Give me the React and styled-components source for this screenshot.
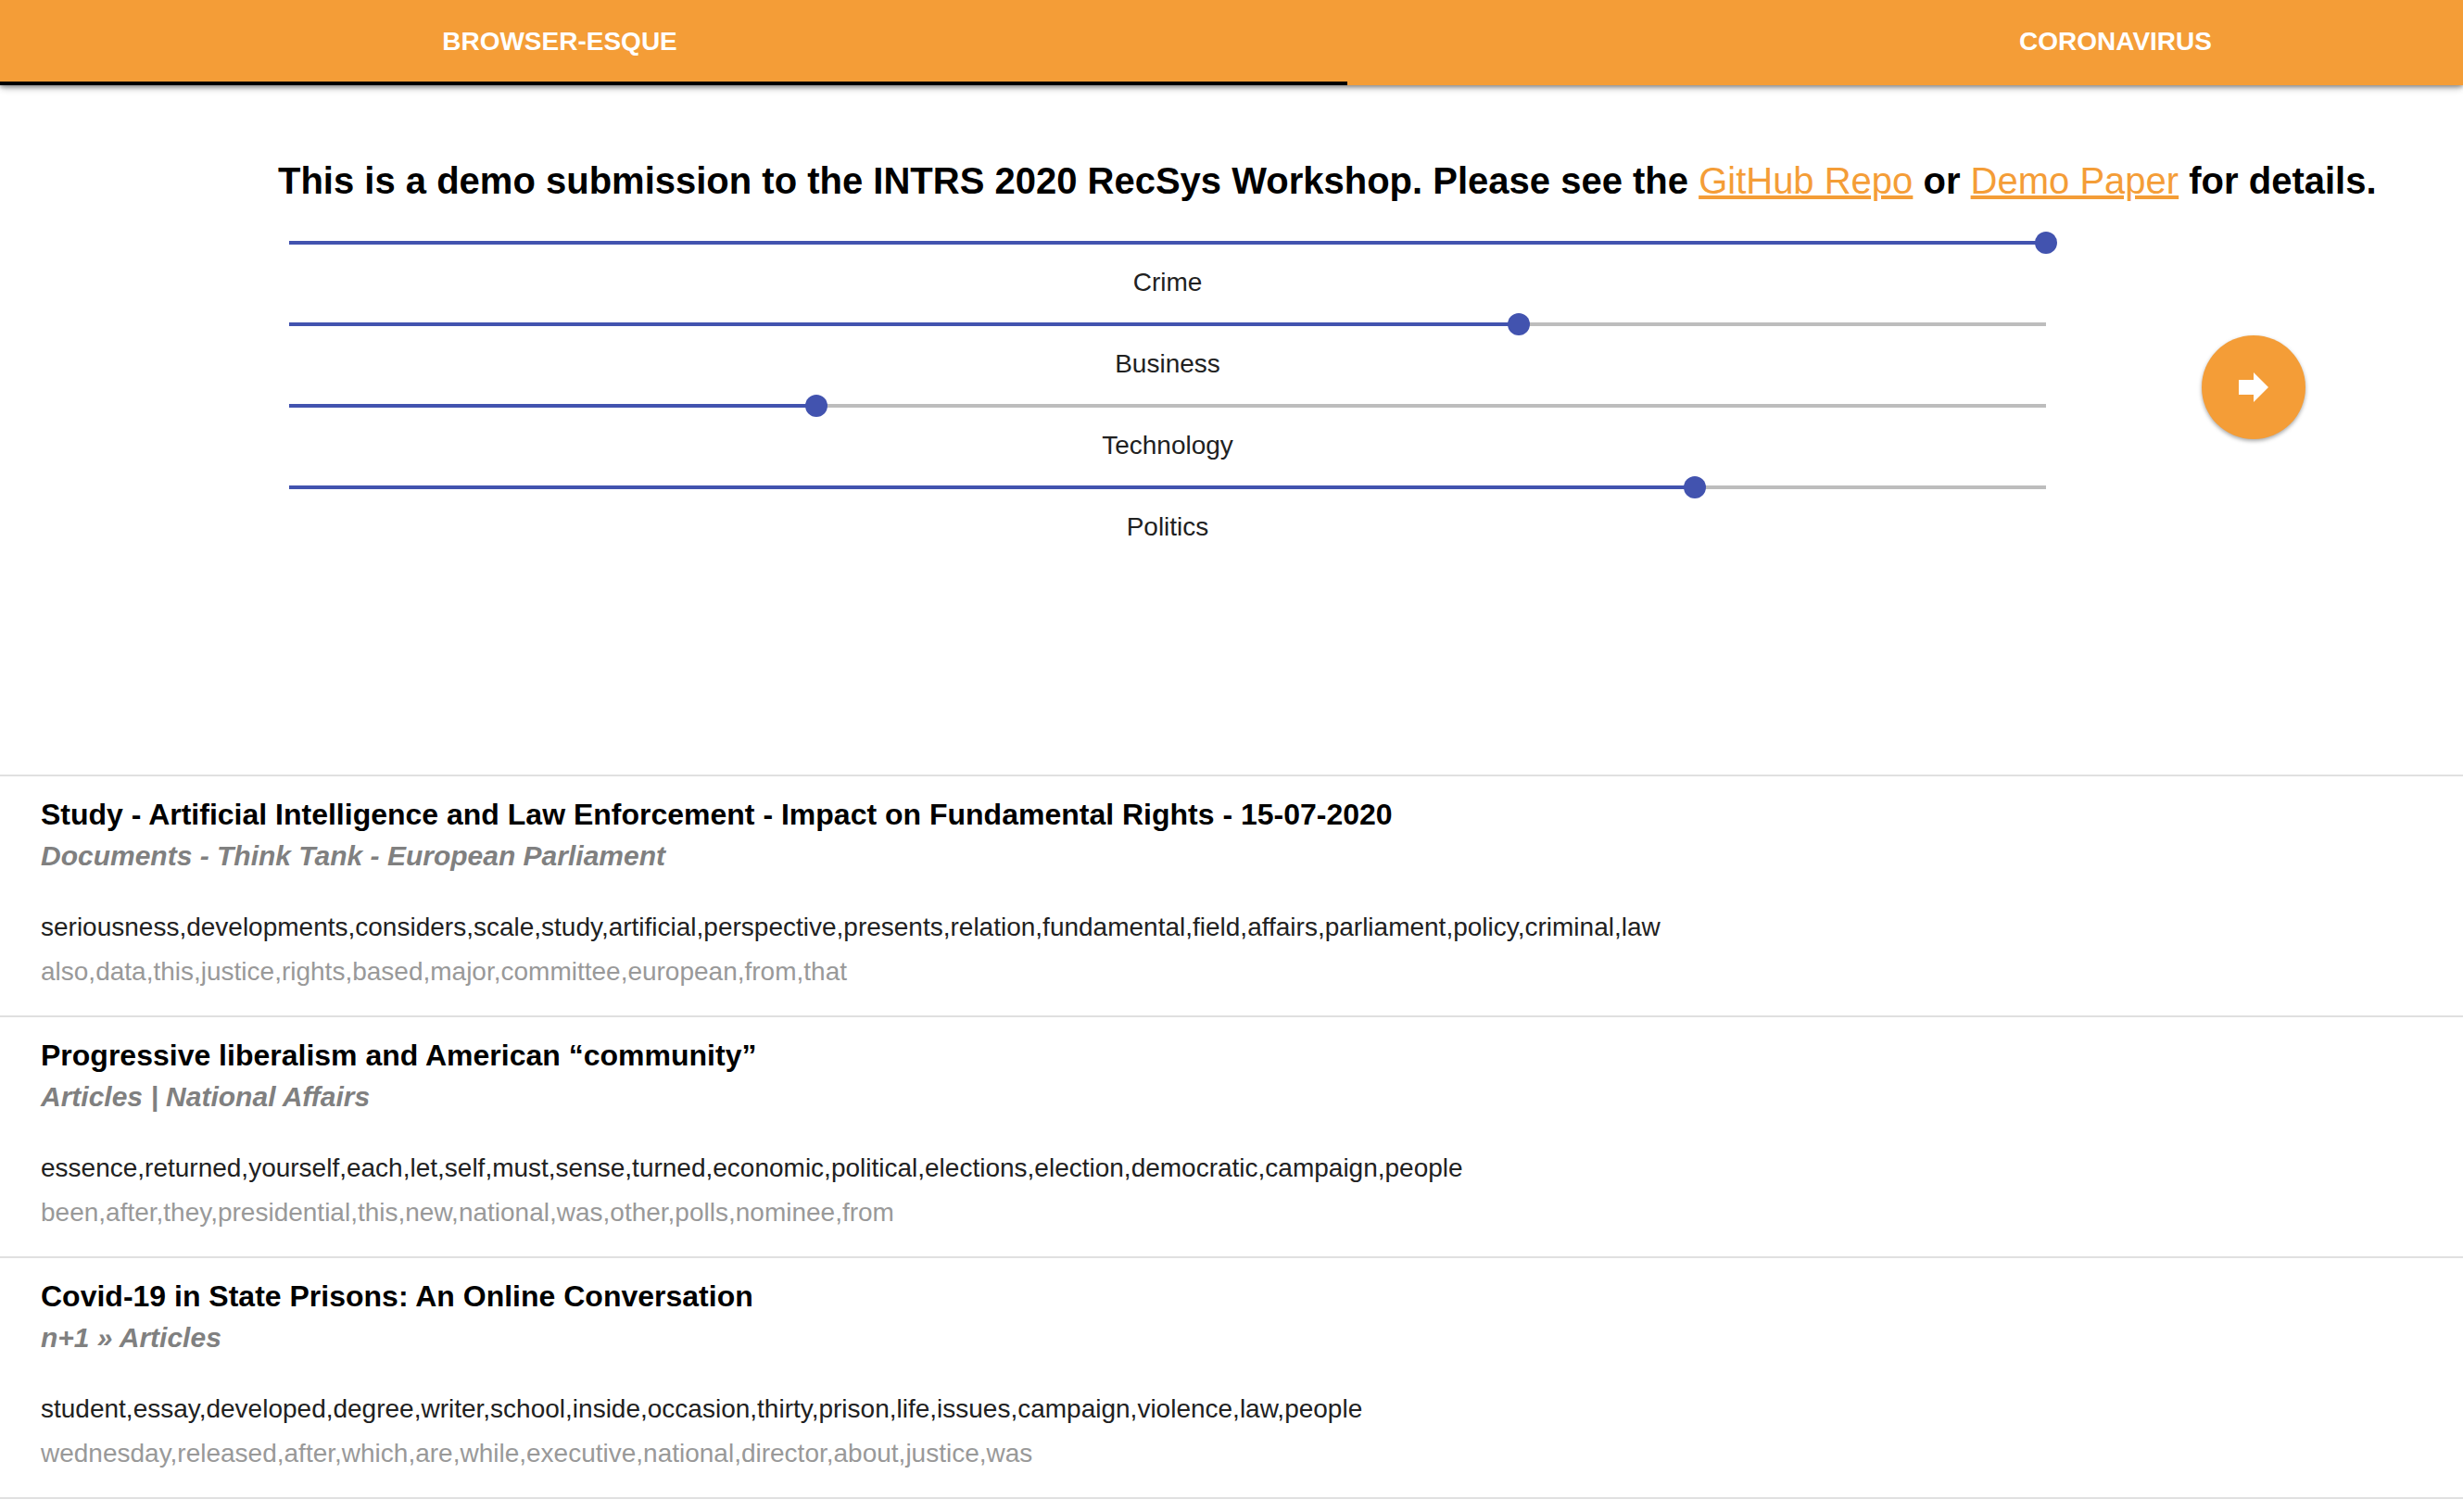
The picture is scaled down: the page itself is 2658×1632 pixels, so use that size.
import React, { useState } from "react";
import styled, { createGlobalStyle } from "styled-components";

const orange = "#f49d37";
const indigo = "#4253af";

const GlobalStyle = createGlobalStyle`
  *, *::before, *::after { box-sizing: border-box; }
  body {
    margin: 0;
    background: #fff;
    color: #212121;
    font-family: "Liberation Sans", Helvetica, Arial, sans-serif;
    font-size: 28px;
  }
`;

const TabBar = styled.header`
  display: grid;
  grid-template-columns: 1454fr 1204fr;
  height: 92px;
  background: ${orange};
  box-shadow: 0 4px 8px -2px rgba(0, 0, 0, 0.2), 0 2px 4px rgba(0, 0, 0, 0.3),
    0 2px 10px rgba(0, 0, 0, 0.12);
`;

const Tab = styled.button`
  border: 0;
  border-bottom: 4px solid ${(p) => (p.$active ? "#000" : "transparent")};
  padding: ${(p) => p.$inset};
  background: none;
  color: #fff;
  font: bold 28px/32px "Liberation Sans", Helvetica, Arial, sans-serif;
  text-transform: uppercase;
  cursor: pointer;
`;

const Intro = styled.section`
  min-height: 744px;
  padding: 78px 14px 0 300px;
`;

const Headline = styled.h1`
  margin: 0 0 30px;
  color: #000;
  font-size: 40px;
  line-height: 50px;
`;

const TextLink = styled.a`
  color: ${orange};
  font-weight: normal;
  text-decoration-thickness: 4px;
  text-underline-offset: 2px;
`;

const Controls = styled.form`
  display: grid;
  grid-template-columns: 1fr 424px;
`;

const SliderList = styled.div`
  display: flex;
  flex-direction: column;
  gap: 2px;
`;

const SliderField = styled.div`
  display: flex;
  flex-direction: column;
`;

const SliderLabel = styled.label`
  line-height: 62px;
  text-align: center;
`;

const Range = styled.input`
  --travel: calc(12px + (100% - 24px) * var(--ratio));
  appearance: none;
  display: block;
  width: 100%;
  height: 24px;
  margin: 0;
  background: linear-gradient(
      to right,
      transparent 12px,
      ${indigo} 12px,
      ${indigo} var(--travel),
      #bdbdbd var(--travel),
      #bdbdbd calc(100% - 12px),
      transparent calc(100% - 12px)
    )
    center / 100% 4px no-repeat;
  cursor: pointer;

  &::-webkit-slider-thumb {
    appearance: none;
    width: 24px;
    height: 24px;
    border-radius: 50%;
    background: ${indigo};
  }
`;

const GoButton = styled.button`
  display: flex;
  align-items: center;
  justify-content: center;
  justify-self: center;
  width: 112px;
  height: 112px;
  margin-top: 112px;
  border: 0;
  padding: 0;
  border-radius: 50%;
  background: ${orange};
  color: #fff;
  box-shadow: 0 2px 4px rgba(0, 0, 0, 0.35);
  cursor: pointer;
`;

const ArticleList = styled.ul`
  margin: 0;
  padding: 0;
  border-top: 2px solid #e0e0e0;
  list-style: none;
`;

const Article = styled.li`
  padding: 20px 44px 23px;
  border-bottom: 2px solid #e0e0e0;
`;

const Title = styled.h2`
  margin: 0;
  color: #000;
  font-size: 32px;
  line-height: 42px;
`;

const Source = styled.h3`
  margin: 0 0 29px;
  color: #808080;
  font-size: 30px;
  font-style: italic;
  line-height: 48px;
`;

const Keywords = styled.p`
  margin: 0;
  color: ${(p) => (p.$muted ? "#999" : "#212121")};
  line-height: 48px;
`;

const topics = [
  { name: "Crime", value: 100 },
  { name: "Business", value: 70 },
  { name: "Technology", value: 30 },
  { name: "Politics", value: 80 },
];

const articles = [
  {
    title:
      "Study - Artificial Intelligence and Law Enforcement - Impact on Fundamental Rights - 15-07-2020",
    source: "Documents - Think Tank - European Parliament",
    main: "seriousness,developments,considers,scale,study,artificial,perspective,presents,relation,fundamental,field,affairs,parliament,policy,criminal,law",
    minor: "also,data,this,justice,rights,based,major,committee,european,from,that",
  },
  {
    title: "Progressive liberalism and American “community”",
    source: "Articles | National Affairs",
    main: "essence,returned,yourself,each,let,self,must,sense,turned,economic,political,elections,election,democratic,campaign,people",
    minor: "been,after,they,presidential,this,new,national,was,other,polls,nominee,from",
  },
  {
    title: "Covid-19 in State Prisons: An Online Conversation",
    source: "n+1 » Articles",
    main: "student,essay,developed,degree,writer,school,inside,occasion,thirty,prison,life,issues,campaign,violence,law,people",
    minor: "wednesday,released,after,which,are,while,executive,national,director,about,justice,was",
  },
];

function TopicSlider({ name, value }) {
  const [level, setLevel] = useState(value);
  const id = `topic-${name.toLowerCase()}`;
  return (
    <SliderField>
      <Range
        id={id}
        type="range"
        min="0"
        max="100"
        value={level}
        onChange={(e) => setLevel(Number(e.target.value))}
        style={{ "--ratio": level / 100 }}
      />
      <SliderLabel htmlFor={id}>{name}</SliderLabel>
    </SliderField>
  );
}

export default function App() {
  const [tab, setTab] = useState(0);
  return (
    <>
      <GlobalStyle />
      <TabBar role="tablist">
        <Tab role="tab" type="button" $inset="10px 246px 8px 0" $active={tab === 0} aria-selected={tab === 0} onClick={() => setTab(0)}>
          Browser-esque
        </Tab>
        <Tab role="tab" type="button" $inset="10px 0 8px 454px" $active={tab === 1} aria-selected={tab === 1} onClick={() => setTab(1)}>
          Coronavirus
        </Tab>
      </TabBar>
      <main>
        <Intro>
          <Headline>
            This is a demo submission to the INTRS 2020 RecSys Workshop. Please see the{" "}
            <TextLink href="#repo">GitHub Repo</TextLink> or{" "}
            <TextLink href="#paper">Demo Paper</TextLink> for details.
          </Headline>
          <Controls onSubmit={(e) => e.preventDefault()}>
            <SliderList>
              {topics.map((t) => (
                <TopicSlider key={t.name} {...t} />
              ))}
            </SliderList>
            <GoButton type="submit" aria-label="Show recommendations">
              <svg width="48" height="48" viewBox="0 0 24 24" fill="currentColor" aria-hidden="true">
                <path d="M12 8V4l8 8-8 8v-4H4V8z" />
              </svg>
            </GoButton>
          </Controls>
        </Intro>
        <ArticleList>
          {articles.map((a) => (
            <Article key={a.title}>
              <Title>{a.title}</Title>
              <Source>{a.source}</Source>
              <Keywords>{a.main}</Keywords>
              <Keywords $muted>{a.minor}</Keywords>
            </Article>
          ))}
        </ArticleList>
      </main>
    </>
  );
}
